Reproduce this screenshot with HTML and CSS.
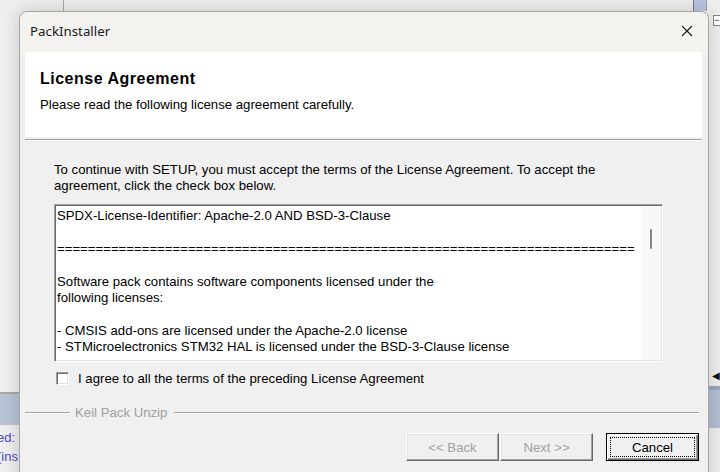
FILE: index.html
```html
<!DOCTYPE html>
<html>
<head>
<meta charset="utf-8">
<link rel="stylesheet" href="styles.css">
</head>
<body>
<div class="desktop">
  <div class="bg-window bg-left">
    <div class="bg-vline"></div>
    <div class="bg-band"></div>
    <div class="bg-text">ed:</div>
    <div class="bg-text">(ins</div>
  </div>
  <div class="bg-window bg-right">
    <div class="bg-scroll"></div>
    <div class="bg-box">−</div>
    <div class="bg-arrow">◀</div>
    <div class="bg-band2"></div>
  </div>

  <div class="dialog">
    <div class="titlebar">
      <span class="title">PackInstaller</span>
      <svg class="close" width="12" height="12" viewBox="0 0 12 12"><path d="M1 1 L11 11 M11 1 L1 11" stroke="#1a1a1a" stroke-width="1.1" fill="none"/></svg>
    </div>
    <div class="client">
      <div class="header">
        <div class="h-title">License Agreement</div>
        <div class="h-sub">Please read the following license agreement carefully.</div>
      </div>
      <div class="etched"></div>
      <div class="content">
        <p class="intro">To continue with SETUP, you must accept the terms of the License Agreement. To accept the<br>agreement, click the check box below.</p>
        <div class="textbox">
          <div class="text">SPDX-License-Identifier: Apache-2.0 AND BSD-3-Clause<br><br>===========================================================================<br><br>Software pack contains software components licensed under the<br>following licenses:<br><br>- CMSIS add-ons are licensed under the Apache-2.0 license<br>- STMicroelectronics STM32 HAL is licensed under the BSD-3-Clause license</div>
          <div class="scrollbar"><div class="thumb"></div></div>
        </div>
        <label class="agree"><span class="checkbox"></span><span>I agree to all the terms of the preceding License Agreement</span></label>
      </div>
      <div class="groupline">
        <span class="gl-short"></span><span class="gl-text">Keil Pack Unzip</span><span class="gl-long"></span>
      </div>
      <div class="buttons">
        <button class="btn disabled">&lt;&lt; Back</button>
        <button class="btn disabled">Next &gt;&gt;</button>
        <button class="btn default"><span class="focus">Cancel</span></button>
      </div>
    </div>
  </div>
</div>
</body>
</html>
```

FILE: styles.css
```css
html, body {
  margin: 0;
  padding: 0;
}
body {
  width: 720px;
  height: 472px;
  overflow: hidden;
  background: #f0f0f0;
  font-family: "Liberation Sans", Arial, sans-serif;
}
.desktop {
  position: relative;
  width: 720px;
  height: 472px;
  background: #efefef;
}
.bg-window {
  position: absolute;
  top: 0;
  bottom: 0;
}
.bg-left {
  left: 0;
  width: 70px;
}
.bg-vline {
  position: absolute;
  left: 63px;
  top: 0;
  width: 1px;
  height: 12px;
  background: #a8a8a8;
}
.bg-band {
  position: absolute;
  left: 0;
  top: 392px;
  width: 70px;
  height: 31px;
  background: #b9c4d6;
  border-top: 2px solid #a9a9a9;
}
.bg-text {
  position: relative;
  top: 428px;
  left: -3px;
  font-size: 13px;
  line-height: 19px;
  color: #5048c8;
}
.bg-right {
  left: 690px;
  width: 30px;
}
.bg-scroll {
  position: absolute;
  left: 3px;
  top: 0;
  width: 12px;
  height: 11px;
  background: #b8c4e0;
  border-left: 1px solid #777;
  border-right: 1px solid #999;
}
.bg-box {
  position: absolute;
  left: 23px;
  top: 15px;
  width: 9px;
  height: 9px;
  border: 1px solid #888;
  background: #fff;
  font-size: 9px;
  line-height: 9px;
  color: #333;
}
.bg-arrow {
  position: absolute;
  left: 22px;
  top: 370px;
  font-size: 10px;
  color: #111;
}
.bg-band2 {
  position: absolute;
  left: 18px;
  top: 386px;
  width: 12px;
  height: 38px;
  background: #b3bfd2;
  border-top: 4px solid #9aa8c0;
}

.dialog {
  position: absolute;
  left: 19px;
  top: 11px;
  width: 688px;
  height: 480px;
  background: #f0f0f0;
  border: 1px solid #a6a6a6;
  border-radius: 8px 8px 0 0;
  box-shadow: 0 0 18px rgba(0, 0, 0, 0.18);
  display: flex;
  flex-direction: column;
}
.titlebar {
  height: 40px;
  background: #f3f2ee;
  border-radius: 8px 8px 0 0;
  display: flex;
  align-items: center;
  justify-content: space-between;
  padding: 0 15px 0 10px;
}
.title {
  font-family: "Noto Sans", "Open Sans", sans-serif;
  font-size: 13.3px;
  color: #1a1a1a;
  position: relative;
  top: -1px;
}
.close {
  position: relative;
  top: -1px;
}
.client {
  padding: 0 6px 0 5px;
  display: flex;
  flex-direction: column;
}
.header {
  background: #fff;
  height: 85px;
  box-sizing: border-box;
  padding: 17px 15px 0 15px;
}
.h-title {
  font-weight: bold;
  font-size: 16px;
  line-height: 20px;
  color: #000;
  letter-spacing: 0.5px;
}
.h-sub {
  margin-top: 8px;
  font-size: 13.2px;
  line-height: 16px;
  color: #000;
}
.etched {
  margin-top: 2px;
  height: 1px;
  background: #a0a0a0;
  border-bottom: 1px solid #fff;
}
.content {
  padding-left: 29px;
  width: 609px;
}
.intro {
  margin: 21px 0 0 0;
  font-size: 13.2px;
  line-height: 16px;
  color: #000;
}
.textbox {
  margin-top: 10px;
  height: 158px;
  box-sizing: border-box;
  border-top: 1px solid #a0a0a0;
  border-left: 1px solid #a0a0a0;
  border-right: 1px solid #fff;
  border-bottom: 1px solid #fff;
  box-shadow: inset 1px 1px 0 #696969, inset -1px -1px 0 #e3e3e3;
  background: #fff;
  display: flex;
  overflow: hidden;
}
.text {
  flex: 1;
  padding: 3px 0 0 2px;
  font-size: 13.2px;
  line-height: 16.4px;
  color: #000;
  white-space: nowrap;
  overflow: hidden;
}
.scrollbar {
  width: 20px;
  margin: 2px 1px 1px 0;
  background: #f8f8f8;
  position: relative;
}
.thumb {
  position: absolute;
  left: 9px;
  top: 22px;
  width: 2px;
  height: 20px;
  background: #858585;
  border-radius: 1px;
}
.agree {
  margin-top: 9px;
  display: flex;
  align-items: center;
  font-size: 13.2px;
  color: #000;
  padding-left: 2px;
}
.checkbox {
  width: 11px;
  height: 11px;
  background: #fff;
  border-top: 1px solid #a0a0a0;
  border-left: 1px solid #a0a0a0;
  border-right: 1px solid #fff;
  border-bottom: 1px solid #fff;
  box-shadow: inset 1px 1px 0 #696969, inset -1px -1px 0 #e3e3e3;
  margin-right: 9px;
}
.groupline {
  margin-top: 19px;
  display: flex;
  align-items: center;
  padding-right: 3px;
}
.gl-short,
.gl-long {
  height: 1px;
  background: #a0a0a0;
  border-bottom: 1px solid #fff;
}
.gl-short {
  width: 45px;
}
.gl-long {
  flex: 1;
}
.gl-text {
  font-size: 13.2px;
  color: #a0a0a0;
  padding: 0 7px 0 5px;
}
.buttons {
  margin-top: 13px;
  display: flex;
  justify-content: flex-end;
  padding-right: 3px;
}
.btn {
  width: 93px;
  height: 28px;
  box-sizing: border-box;
  font-family: "Liberation Sans", Arial, sans-serif;
  font-size: 13.2px;
  background: #f0f0f0;
  border-top: 1px solid #fff;
  border-left: 1px solid #fff;
  border-right: 1px solid #696969;
  border-bottom: 1px solid #696969;
  box-shadow: inset -1px -1px 0 #a0a0a0, inset 1px 1px 0 #e3e3e3;
  padding: 0;
  margin-left: 1px;
}
.btn.disabled {
  color: #a0a0a0;
}
.btn.default {
  margin-left: 13px;
  border: 1px solid #000;
  box-shadow: inset 1px 1px 0 #fff, inset -1px -1px 0 #696969, inset -2px -2px 0 #a0a0a0;
  color: #000;
  padding: 3px;
}
.focus {
  display: flex;
  align-items: center;
  justify-content: center;
  height: 100%;
  box-sizing: border-box;
  border: 1px dotted #000;
}
```
